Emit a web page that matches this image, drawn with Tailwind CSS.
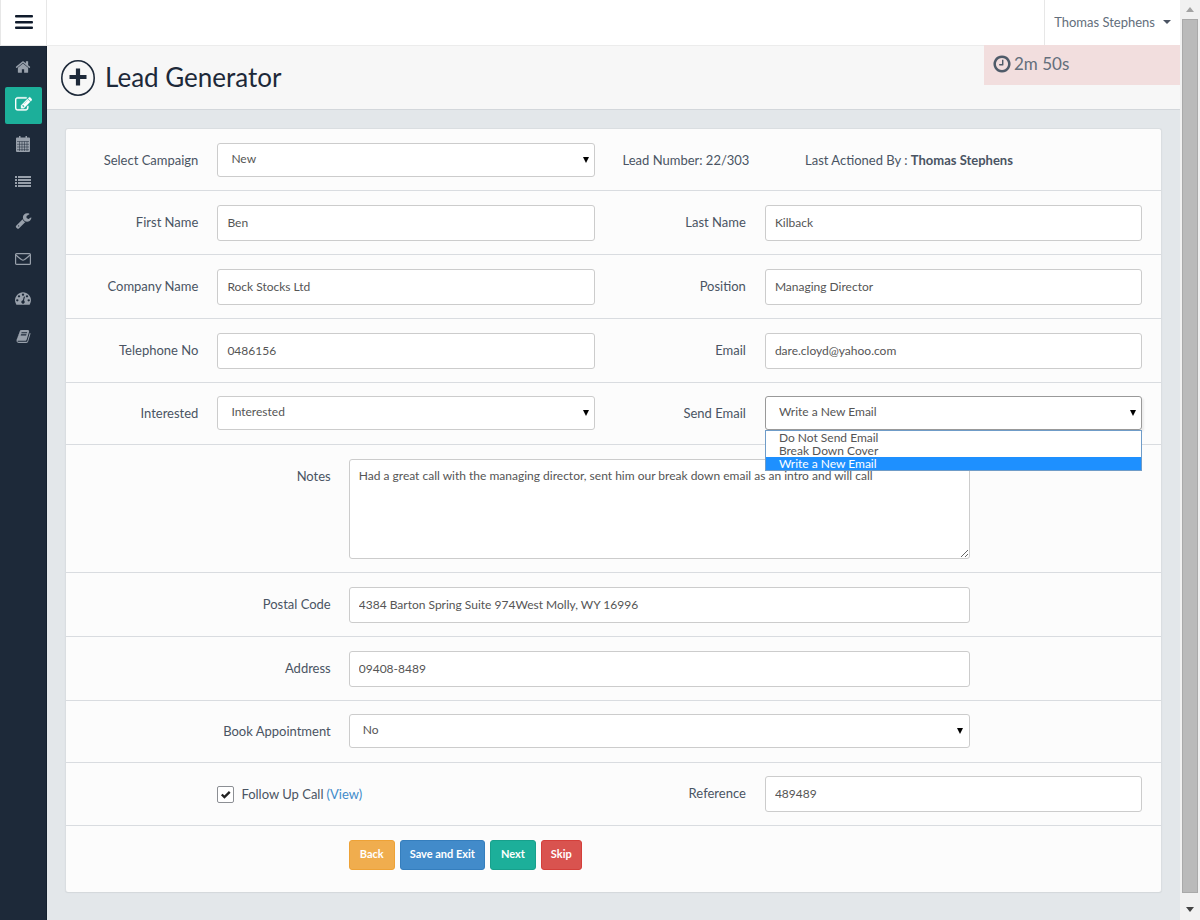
<!DOCTYPE html>
<html lang="en">
<head>
<meta charset="utf-8">
<title>Lead Generator</title>
<script src="https://cdn.jsdelivr.net/npm/@tailwindcss/browser@4"></script>
</head>
<body class="flex min-h-screen bg-[#e3e7ea] font-['Lato',sans-serif] text-[13px] leading-[18px] text-[#4a5463]">

<aside class="flex w-[47px] shrink-0 flex-col border-r border-[#14202f] bg-[#1d2939]">
  <button type="button" aria-label="Toggle menu" class="-mr-px flex h-[46px] items-center justify-center border-x border-b border-[#e7e7e7] bg-white pb-[2px]">
    <svg class="h-4 w-[18px]" viewBox="0 0 18 16" fill="#0f1a2b"><rect y="1" width="18" height="2.500" rx="1"/><rect y="7" width="18" height="2.500" rx="1"/><rect y="12.500" width="18" height="2.500" rx="1"/></svg>
  </button>
  <nav class="mt-[2px] flex h-[307px] flex-col justify-between px-[5px] text-[#98a0ab]">
    <a href="#" aria-label="Home" class="flex h-[37px] items-center justify-center"><svg class="size-4" viewBox="0 0 1792 1792" fill="currentColor"><path d="M1472 992v480q0 26-19 45t-45 19h-384v-384h-256v384h-384q-26 0-45-19t-19-45v-480q0-1 .5-3t.5-3l575-474 575 474q1 2 1 6zm223-69l-62 74q-8 9-21 11h-3q-13 0-21-7l-692-577-692 577q-12 8-24 7-13-2-21-11l-62-74q-8-10-7-23.500t11-21.500l719-599q32-26 76-26t76 26l244 204v-195q0-14 9-23t23-9h192q14 0 23 9t9 23v408l219 182q10 8 11 21.500t-7 23.500z"/></svg></a>
    <a href="#" aria-label="Leads" class="-mr-px flex h-[37px] items-center justify-center rounded-[2px] bg-[#1caf9a] pb-[2px] text-white"><svg class="size-[17px]" viewBox="0 0 1792 1792" fill="currentColor" stroke="currentColor" stroke-width="36"><path d="M888 1184l116-116-152-152-116 116v56h96v96h56zm440-720q-16-16-33 1l-350 350q-17 17-1 33t33-1l350-350q17-17 1-33zm80 594v190q0 119-84.500 203.500t-203.500 84.500h-832q-119 0-203.500-84.500t-84.500-203.500v-832q0-119 84.500-203.500t203.500-84.500h832q63 0 117 25 15 7 18 23 3 17-9 29l-49 49q-14 14-32 8-23-6-45-6h-832q-66 0-113 47t-47 113v832q0 66 47 113t113 47h832q66 0 113-47t47-113v-126q0-13 9-22l64-64q15-15 35-7t20 29zm-96-738l288 288-672 672h-288v-288zm444 132l-92 92-288-288 92-92q28-28 68-28t68 28l152 152q28 28 28 68t-28 68z"/></svg></a>
    <a href="#" aria-label="Calendar" class="flex h-[37px] items-center justify-center"><svg class="size-4" viewBox="0 0 16 16"><path d="M4 0h1.500v3H4zM10.500 0H12v3h-1.500zM2 1.500h12a1 1 0 0 1 1 1V15a1 1 0 0 1-1 1H2a1 1 0 0 1-1-1V2.500a1 1 0 0 1 1-1z" fill="currentColor"/><path d="M2 5.500h12M2 8.300h12M2 11h12M2 13.700h12M4.500 5.500V15M7 5.500V15M9.500 5.500V15M12 5.500V15" stroke="#1d2939" stroke-width=".5"/></svg></a>
    <a href="#" aria-label="List" class="flex h-[37px] items-center justify-center"><svg class="size-4" viewBox="0 0 16 16" fill="currentColor"><path d="M0 2h2v2H0zM0 5h2v2H0zM0 8h2v2H0zM0 11h2v2H0zM3 2h13v2H3zM3 5h13v2H3zM3 8h13v2H3zM3 11h13v2H3z"/></svg></a>
    <a href="#" aria-label="Tools" class="flex h-[37px] items-center justify-center"><svg class="size-[17px]" viewBox="0 0 1792 1792" fill="currentColor"><path d="M448 1472q0-26-19-45t-45-19-45 19-19 45 19 45 45 19 45-19 19-45zm644-420l-682 682q-37 37-90 37-52 0-91-37l-106-108q-38-36-38-90 0-53 38-91l681-681q39 98 114.500 173.500t173.500 114.500zm634-435q0 39-23 106-47 134-164.500 217.500t-258.500 83.500q-185 0-316.500-131.500t-131.500-316.500 131.500-316.500 316.500-131.500q58 0 121.500 16.500t107.500 46.500q16 11 16 28t-16 28l-293 169v224l193 107q5-3 79-48.500t135.500-81 70.500-35.500q15 0 23.500 10t8.500 25z"/></svg></a>
    <a href="#" aria-label="Mail" class="flex h-[37px] items-center justify-center"><svg class="size-4" viewBox="0 0 16 16" fill="none" stroke="currentColor" stroke-width="1.200"><rect x=".6" y="2.600" width="14.800" height="10.800" rx="1"/><path d="M1 4c2 2 4 3.400 5.500 4.600 1 .8 2 .8 3 0C11 7.400 13 6 15 4"/></svg></a>
    <a href="#" aria-label="Dashboard" class="flex h-[37px] items-center justify-center"><svg class="size-4" viewBox="0 0 1792 1792" fill="currentColor"><path d="M384 1152q0-53-37.500-90.500t-90.500-37.500-90.500 37.500-37.500 90.500 37.500 90.500 90.500 37.500 90.500-37.500 37.500-90.500zm192-448q0-53-37.500-90.500t-90.500-37.500-90.500 37.500-37.500 90.500 37.500 90.500 90.500 37.500 90.500-37.500 37.500-90.500zm428 481l101-382q6-26-7.500-48.500t-38.500-29.500-48 6.500-30 39.500l-101 382q-60 5-107 43.500t-63 98.500q-20 77 20 146t117 89 146-20 89-117q16-60-6-117t-72-91zm660-33q0-53-37.500-90.500t-90.500-37.500-90.500 37.500-37.500 90.500 37.500 90.500 90.500 37.500 90.500-37.500 37.500-90.500zm-640-640q0-53-37.500-90.500t-90.500-37.500-90.500 37.500-37.500 90.500 37.500 90.500 90.500 37.500 90.500-37.500 37.500-90.500zm448 192q0-53-37.500-90.500t-90.500-37.500-90.500 37.500-37.500 90.500 37.500 90.500 90.500 37.500 90.500-37.500 37.500-90.500zm320 448q0 261-141 483-19 29-54 29h-1402q-35 0-54-29-141-221-141-483 0-182 71-348t191-286 286-191 348-71 348 71 286 191 191 286 71 348z"/></svg></a>
    <a href="#" aria-label="Book" class="flex h-[37px] items-center justify-center"><svg class="size-[15px]" viewBox="0 0 1792 1792" fill="currentColor"><path d="M1703 478q40 57 18 129l-275 906q-19 64-76.500 107.500t-122.500 43.500h-923q-77 0-148.500-53.500t-99.500-131.500q-24-67-2-127 0-4 3-27t4-37q1-8-3-21.500t-3-19.500q2-11 8-21t16.500-23.500 16.500-23.500q23-38 45-91.500t30-91.500q3-10 .5-30t-.5-28q3-11 17-28t17-23q21-36 42-92t25-90q1-9-2.500-32t.5-28q4-13 22-30.500t22-22.500q19-26 42.500-84.500t27.500-96.500q1-8-3-25.500t-2-26.500q2-8 9-18t18-23 17-21q8-12 16.500-30.500t15-35 16-36 19.500-32 26.500-23.500 36-11.500 47.500 5.500l-1 3q38-9 51-9h761q74 0 114 56t18 130l-274 906q-36 119-71.500 153.500t-128.500 34.500h-869q-27 0-38 15-11 16-1 43 24 70 144 70h923q29 0 56-15.500t35-41.500l300-987q7-22 5-57 38 15 59 43zm-1064 2q-4 13 2 22.500t20 9.500h608q13 0 25.500-9.500t16.500-22.500l21-64q4-13-2-22.500t-20-9.500h-608q-13 0-25.500 9.500t-16.500 22.500zm-83 256q-4 13 2 22.500t20 9.500h608q13 0 25.500-9.500t16.500-22.500l21-64q4-13-2-22.500t-20-9.500h-608q-13 0-25.500 9.500t-16.500 22.500z"/></svg></a>
  </nav>
</aside>

<div class="flex min-w-0 flex-1 flex-col">
  <header class="flex h-[46px] justify-end border-b border-[#ececec] bg-white">
    <button type="button" class="flex items-center gap-2 border-l border-[#e7e7e7] pb-[2px] pl-[9px] pr-[9px] text-[#636e7b]">Thomas Stephens
      <svg class="h-1 w-2" viewBox="0 0 8 4" fill="#4a5463"><path d="M0 0h8L4 4z"/></svg>
    </button>
  </header>

  <div class="relative flex h-16 items-center gap-[10px] border-b border-[#d3d7db] bg-[#f7f7f7] pl-[14px]">
    <svg class="h-9 w-[34px]" viewBox="0 0 34 36" fill="none" stroke="#1d2939"><ellipse cx="17" cy="18" rx="16.200" ry="17.200" stroke-width="1.600"/><path d="M17 8.500v17M8.500 17h17" stroke-width="4.200"/></svg>
    <h1 class="pb-[2px] text-[26px] leading-8 text-[#1d2939]">Lead Generator</h1>
    <div class="absolute -top-px right-0 flex h-10 w-[196px] items-center gap-[2px] bg-[#f2dede] pb-[2px] pl-2 text-[17px] text-[#636e7b]">
      <svg class="size-5 shrink-0" viewBox="0 0 1792 1792" fill="#4f5b69"><path d="M1024 544v448q0 14-9 23t-23 9h-320q-14 0-23-9t-9-23v-64q0-14 9-23t23-9h224v-352q0-14 9-23t23-9h64q14 0 23 9t9 23zm416 352q0-148-73-273t-198-198-273-73-273 73-198 198-73 273 73 273 198 198 273 73 273-73 198-198 73-273zm224 0q0 209-103 385.500t-279.500 279.500-385.500 103-385.500-103-279.500-279.500-103-385.500 103-385.500 279.500-279.500 385.500-103 385.500 103 279.500 279.500 103 385.500z"/></svg>
      2m 50s
    </div>
  </div>

  <main class="px-[18px] pt-[18px] pb-6">
    <form class="rounded-[3px] border-x border-t border-[#dadee1] bg-[#fcfcfc] shadow-[0_1px_1px_#d3d7db]">

      <div class="grid grid-cols-2 border-b border-[#d9dce0] pt-[14px] pb-[13px]">
        <div class="grid grid-cols-4 px-[9px]">
          <label for="campaign" class="px-[9px] pt-2 text-right">Select Campaign</label>
          <div class="relative col-span-3 px-[10px]">
            <select id="campaign" class="h-[34px] w-full appearance-none rounded-[3px] border border-[#ccc] bg-white px-[13px] pb-[2px] text-[12px] text-[#555]"><option>New</option></select>
            <svg class="pointer-events-none absolute right-[16px] top-[14px] size-[6px]" viewBox="0 0 6 6"><path d="M0 0h6L3 6z"/></svg>
          </div>
        </div>
        <div class="grid grid-cols-3 pt-2">
          <p class="px-[9px]">Lead Number: 22/303</p>
          <p class="col-span-2 px-[9px]">Last Actioned By : <strong>Thomas Stephens</strong></p>
        </div>
      </div>

      <div class="grid grid-cols-2 border-b border-[#d9dce0] pt-[14px] pb-[13px]">
        <div class="grid grid-cols-4 px-[9px]">
          <label for="first" class="px-[9px] pt-2 text-right">First Name</label>
          <div class="col-span-3 px-[10px]"><input id="first" value="Ben" class="h-9 w-full rounded-[3px] border border-[#ccc] bg-white px-[9px] pb-[2px] text-[12px] text-[#555]"></div>
        </div>
        <div class="grid grid-cols-4 px-[9px]">
          <label for="last" class="px-[9px] pt-2 text-right">Last Name</label>
          <div class="col-span-3 px-[10px]"><input id="last" value="Kilback" class="h-9 w-full rounded-[3px] border border-[#ccc] bg-white px-[9px] pb-[2px] text-[12px] text-[#555]"></div>
        </div>
      </div>

      <div class="grid grid-cols-2 border-b border-[#d9dce0] pt-[14px] pb-[13px]">
        <div class="grid grid-cols-4 px-[9px]">
          <label for="company" class="px-[9px] pt-2 text-right">Company Name</label>
          <div class="col-span-3 px-[10px]"><input id="company" value="Rock Stocks Ltd" class="h-9 w-full rounded-[3px] border border-[#ccc] bg-white px-[9px] pb-[2px] text-[12px] text-[#555]"></div>
        </div>
        <div class="grid grid-cols-4 px-[9px]">
          <label for="position" class="px-[9px] pt-2 text-right">Position</label>
          <div class="col-span-3 px-[10px]"><input id="position" value="Managing Director" class="h-9 w-full rounded-[3px] border border-[#ccc] bg-white px-[9px] pb-[2px] text-[12px] text-[#555]"></div>
        </div>
      </div>

      <div class="grid grid-cols-2 border-b border-[#d9dce0] pt-[14px] pb-[13px]">
        <div class="grid grid-cols-4 px-[9px]">
          <label for="phone" class="px-[9px] pt-2 text-right">Telephone No</label>
          <div class="col-span-3 px-[10px]"><input id="phone" value="0486156" class="h-9 w-full rounded-[3px] border border-[#ccc] bg-white px-[9px] pb-[2px] text-[12px] text-[#555]"></div>
        </div>
        <div class="grid grid-cols-4 px-[9px]">
          <label for="email" class="px-[9px] pt-2 text-right">Email</label>
          <div class="col-span-3 px-[10px]"><input id="email" value="dare.cloyd@yahoo.com" class="h-9 w-full rounded-[3px] border border-[#ccc] bg-white px-[9px] pb-[2px] text-[12px] text-[#555]"></div>
        </div>
      </div>

      <div class="grid grid-cols-2 border-b border-[#d9dce0] pt-[13px] pb-[14px]">
        <div class="grid grid-cols-4 px-[9px]">
          <label for="interested" class="px-[9px] pt-2 text-right">Interested</label>
          <div class="relative col-span-3 px-[10px]">
            <select id="interested" class="h-[34px] w-full appearance-none rounded-[3px] border border-[#ccc] bg-white px-[13px] pb-[2px] text-[12px] text-[#555]"><option>Interested</option></select>
            <svg class="pointer-events-none absolute right-[16px] top-[14px] size-[6px]" viewBox="0 0 6 6"><path d="M0 0h6L3 6z"/></svg>
          </div>
        </div>
        <div class="grid grid-cols-4 px-[9px]">
          <label for="send" class="px-[9px] pt-2 text-right">Send Email</label>
          <div class="relative col-span-3 px-[10px]">
            <select id="send" class="h-[34px] w-full appearance-none rounded-[3px] border border-[#999] bg-white px-[13px] pb-[2px] text-[12px] text-[#555] shadow-[2px_2px_2px_#ececec]"><option>Write a New Email</option></select>
            <svg class="pointer-events-none absolute right-[16px] top-[14px] size-[6px]" viewBox="0 0 6 6"><path d="M0 0h6L3 6z"/></svg>
            <ul role="listbox" aria-label="Send Email" class="absolute inset-x-[10px] top-[34px] z-10 border border-[#6f9cc8] bg-white text-[12px] leading-[13px] text-[#555]">
              <li role="option" class="px-[13px]">Do Not Send Email</li>
              <li role="option" class="px-[13px]">Break Down Cover</li>
              <li role="option" aria-selected="true" class="bg-[#1e90ff] px-[13px] text-white">Write a New Email</li>
            </ul>
          </div>
        </div>
      </div>

      <div class="grid grid-cols-12 border-b border-[#d9dce0] pt-[14px] pb-[13px]">
        <label for="notes" class="col-span-3 px-[9px] pt-2 text-right">Notes</label>
        <div class="col-span-7 px-[9px]"><textarea id="notes" class="block h-[100px] w-full rounded-[3px] border border-[#ccc] bg-white px-[9px] pt-[7px] text-[12px] leading-[18px] text-[#555]">Had a great call with the managing director, sent him our break down email as an intro and will call</textarea></div>
      </div>

      <div class="grid grid-cols-12 border-b border-[#d9dce0] pt-[14px] pb-[13px]">
        <label for="postal" class="col-span-3 px-[9px] pt-2 text-right">Postal Code</label>
        <div class="col-span-7 px-[9px]"><input id="postal" value="4384 Barton Spring Suite 974West Molly, WY 16996" class="h-9 w-full rounded-[3px] border border-[#ccc] bg-white px-[9px] pb-[2px] text-[12px] text-[#555]"></div>
      </div>

      <div class="grid grid-cols-12 border-b border-[#d9dce0] pt-[14px] pb-[13px]">
        <label for="address" class="col-span-3 px-[9px] pt-2 text-right">Address</label>
        <div class="col-span-7 px-[9px]"><input id="address" value="09408-8489" class="h-9 w-full rounded-[3px] border border-[#ccc] bg-white px-[9px] pb-[2px] text-[12px] text-[#555]"></div>
      </div>

      <div class="grid grid-cols-12 border-b border-[#d9dce0] pt-[13px] pb-[14px]">
        <label for="book" class="col-span-3 px-[9px] pt-2 text-right">Book Appointment</label>
        <div class="relative col-span-7 px-[9px]">
          <select id="book" class="h-[34px] w-full appearance-none rounded-[3px] border border-[#ccc] bg-white px-[13px] pb-[2px] text-[12px] text-[#555]"><option>No</option></select>
          <svg class="pointer-events-none absolute right-[16px] top-[14px] size-[6px]" viewBox="0 0 6 6"><path d="M0 0h6L3 6z"/></svg>
        </div>
      </div>

      <div class="grid grid-cols-2 border-b border-[#d9dce0] pt-[13px] pb-[13px]">
        <div class="grid grid-cols-4 px-[9px]">
          <div class="col-span-3 col-start-2 flex items-center px-[10px]">
            <span class="relative mr-[7px] size-[17px] shrink-0">
              <input id="follow" type="checkbox" checked class="block size-[17px] appearance-none rounded-[2px] border border-[#8c8f94] bg-white">
              <svg class="pointer-events-none absolute inset-0 size-[17px]" viewBox="0 0 16 16" fill="none" stroke="#222" stroke-width="2.200"><path d="M4.500 8l2.500 2.500L12 5.500"/></svg>
            </span>
            <label for="follow">Follow Up Call</label><a href="#" class="ml-[3px] text-[#428bca]">(View)</a>
          </div>
        </div>
        <div class="grid grid-cols-4 px-[9px]">
          <label for="reference" class="px-[9px] pt-2 text-right">Reference</label>
          <div class="col-span-3 px-[10px]"><input id="reference" value="489489" class="h-9 w-full rounded-[3px] border border-[#ccc] bg-white px-[9px] pb-[2px] text-[12px] text-[#555]"></div>
        </div>
      </div>

      <div class="grid grid-cols-12 pt-[14px] pb-[22px]">
        <div class="col-span-7 col-start-4 flex gap-[5px] px-[9px] text-[11px] font-bold text-white">
          <button type="button" class="h-[30px] rounded-[3px] border border-[#eea236] bg-[#f0ad4e] px-[10px] pb-[2px]">Back</button>
          <button type="button" class="h-[30px] rounded-[3px] border border-[#357ebd] bg-[#428bca] px-[9px] pb-[2px]">Save and Exit</button>
          <button type="button" class="h-[30px] rounded-[3px] border border-[#17a08c] bg-[#1caf9a] px-[10px] pb-[2px]">Next</button>
          <button type="button" class="h-[30px] rounded-[3px] border border-[#d43f3a] bg-[#d9534f] px-[9px] pb-[2px]">Skip</button>
        </div>
      </div>
    </form>
  </main>
</div>

<!-- scroll bar -->
<div aria-hidden="true" class="flex w-5 shrink-0 flex-col items-center bg-[#f1f1f1]">
  <svg class="my-[7px] h-[5px] w-2 shrink-0" viewBox="0 0 8 5" fill="#a3a3a3"><path d="M0 5l4-5 4 5z"/></svg>
  <div class="w-4 flex-1 border border-[#a9a9a9] bg-[#bababa]"></div>
  <svg class="mt-[14px] mb-2 h-[5px] w-2 shrink-0" viewBox="0 0 8 5" fill="#444"><path d="M0 0h8L4 5z"/></svg>
</div>
</body>
</html>
